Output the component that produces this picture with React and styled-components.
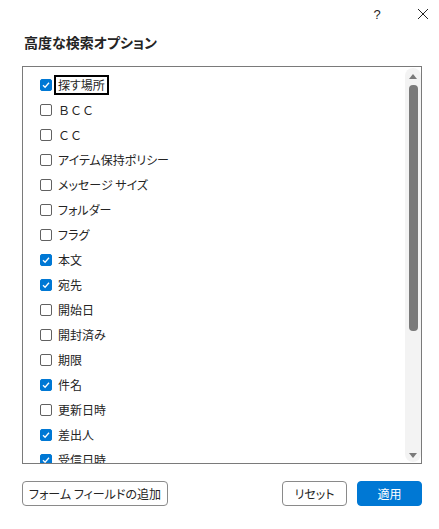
import React from "react";
import styled, { createGlobalStyle } from "styled-components";

const GlobalStyle = createGlobalStyle`
  html, body {
    margin: 0;
    padding: 0;
    background: #ffffff;
  }
  body {
    font-family: "Noto Sans CJK JP", "Noto Sans", sans-serif;
    color: #242424;
  }
`;

const Dialog = styled.div`
  width: 439px;
  height: 529px;
  display: flex;
  flex-direction: column;
  box-sizing: border-box;
  overflow: hidden;
`;

const TopBar = styled.div`
  height: 28px;
  display: flex;
  justify-content: flex-end;
  align-items: center;
  gap: 14px;
`;

const IconButton = styled.div`
  width: 32px;
  height: 28px;
  display: flex;
  align-items: center;
  justify-content: center;
  color: #242424;
  font-family: "Liberation Sans", sans-serif;
  font-size: 13px;
`;

const Title = styled.h1`
  margin: 4px 0 0 24px;
  font-size: 14px;
  line-height: 20px;
  font-weight: 700;
  font-feature-settings: "palt";
  color: #242424;
`;

const ListBox = styled.div`
  margin: 14px 0 0 22px;
  width: 400px;
  height: 398px;
  box-sizing: border-box;
  border: 1px solid #7a7a7a;
  display: flex;
`;

const List = styled.div`
  flex: 1;
  padding: 5px 0 0 17px;
  overflow: hidden;
`;

const Row = styled.label`
  height: 25px;
  display: flex;
  align-items: center;
  gap: 4px;
  font-size: 12px;
  color: #242424;
`;

const Box = styled.span`
  width: 12px;
  height: 12px;
  flex: none;
  box-sizing: border-box;
  border-radius: 2px;
  border: 1px solid ${({ checked }) => (checked ? "#0078d4" : "#616161")};
  background: ${({ checked }) => (checked ? "#0078d4" : "#ffffff")};
  display: flex;
  align-items: center;
  justify-content: center;
`;

const Label = styled.span`
  padding: 0 2px;
  line-height: 16px;
  font-feature-settings: ${({ mono }) => (mono ? "normal" : '"palt"')};
  outline: ${({ focused }) => (focused ? "2px solid #000000" : "none")};
  outline-offset: 0;
`;

const Track = styled.div`
  width: 16px;
  margin: 1px 0;
  background: #f3f3f3;
  border-radius: 8px;
  display: flex;
  flex-direction: column;
  align-items: center;
`;

const Arrow = styled.div`
  width: 0;
  height: 0;
  border-left: 4px solid transparent;
  border-right: 4px solid transparent;
  ${({ down }) =>
    down ? "border-top: 5px solid #7a7a7a;" : "border-bottom: 5px solid #7a7a7a;"}
  margin: ${({ down }) => (down ? "auto 0 4px" : "6px 0 0")};
`;

const Thumb = styled.div`
  width: 9px;
  height: 246px;
  margin-top: 6px;
  border-radius: 4px;
  background: #7a7a7a;
`;

const Footer = styled.div`
  margin: 17px 17px 0 22px;
  display: flex;
  align-items: center;
  gap: 10px;
`;

const Button = styled.button`
  height: 25px;
  box-sizing: border-box;
  padding: 0 ${({ wide }) => (wide ? "6px" : "0")};
  min-width: 65px;
  border-radius: 4px;
  border: 1px solid ${({ primary }) => (primary ? "#0078d4" : "#8a8a8a")};
  background: ${({ primary }) => (primary ? "#0078d4" : "#ffffff")};
  color: ${({ primary }) => (primary ? "#ffffff" : "#242424")};
  font-family: "Noto Sans CJK JP", sans-serif;
  font-size: 12px;
  font-feature-settings: "palt";
  margin-left: ${({ push }) => (push ? "auto" : "0")};
`;

const items = [
  { label: "探す場所", checked: true, focused: true },
  { label: "ＢＣＣ", mono: true },
  { label: "ＣＣ", mono: true },
  { label: "アイテム保持ポリシー" },
  { label: "メッセージ サイズ" },
  { label: "フォルダー" },
  { label: "フラグ" },
  { label: "本文", checked: true },
  { label: "宛先", checked: true },
  { label: "開始日" },
  { label: "開封済み" },
  { label: "期限" },
  { label: "件名", checked: true },
  { label: "更新日時" },
  { label: "差出人", checked: true },
  { label: "受信日時", checked: true },
];

const Check = () => (
  <svg width="8" height="8" viewBox="0 0 8 8">
    <path d="M1 4.2 L3.1 6.2 L7 1.8" fill="none" stroke="#fff" strokeWidth="1.3" />
  </svg>
);

const Close = () => (
  <svg width="12" height="12" viewBox="0 0 12 12">
    <path d="M1 1 L11 11 M11 1 L1 11" stroke="#242424" strokeWidth="1" />
  </svg>
);

export default function App() {
  return (
    <>
      <GlobalStyle />
      <Dialog>
        <TopBar>
          <IconButton>?</IconButton>
          <IconButton>
            <Close />
          </IconButton>
        </TopBar>
        <Title>高度な検索オプション</Title>
        <ListBox>
          <List>
            {items.map((it) => (
              <Row key={it.label}>
                <Box checked={it.checked}>{it.checked && <Check />}</Box>
                <Label focused={it.focused} mono={it.mono}>
                  {it.label}
                </Label>
              </Row>
            ))}
          </List>
          <Track>
            <Arrow />
            <Thumb />
            <Arrow down />
          </Track>
        </ListBox>
        <Footer>
          <Button wide>フォーム フィールドの追加</Button>
          <Button push>リセット</Button>
          <Button primary>適用</Button>
        </Footer>
      </Dialog>
    </>
  );
}
